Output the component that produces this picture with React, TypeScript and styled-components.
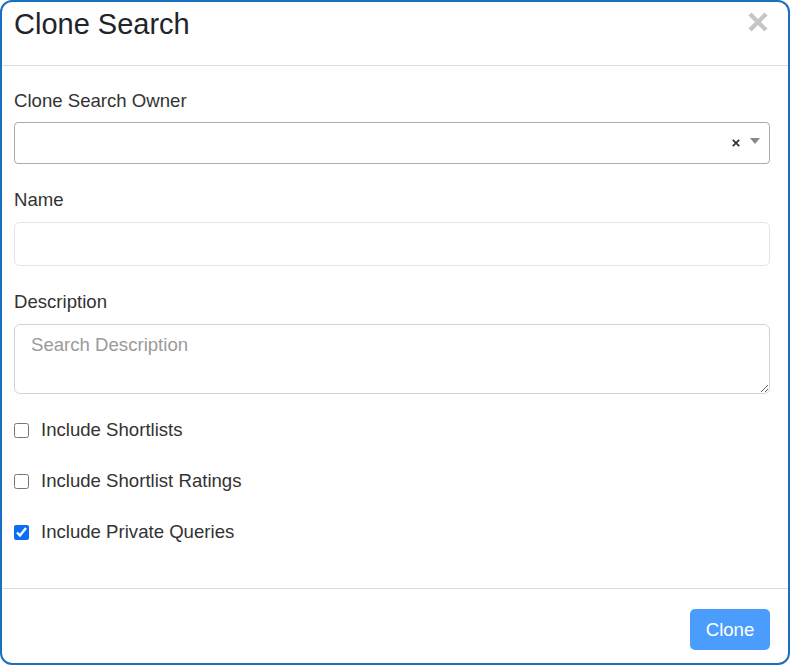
import React from "react";
import styled, { createGlobalStyle } from "styled-components";

const GlobalStyle = createGlobalStyle`
  html, body {
    margin: 0;
    padding: 0;
    background: #ffffff;
  }
  body {
    font-family: "Liberation Sans", Arial, sans-serif;
    color: #212529;
  }
`;

const Modal = styled.div`
  box-sizing: border-box;
  width: 790px;
  height: 665px;
  border: 2px solid #1a6fc1;
  border-radius: 12px;
  background: #fff;
  display: flex;
  flex-direction: column;
  overflow: hidden;
`;

const Header = styled.div`
  height: 64px;
  box-sizing: border-box;
  border-bottom: 1px solid #d9dde1;
  padding: 5px 20px 0 12px;
  display: flex;
  align-items: flex-start;
  justify-content: space-between;
`;

const Title = styled.h4`
  margin: 0;
  font-size: 29px;
  font-weight: 400;
  line-height: 35px;
  color: #212529;
`;

const CloseButton = styled.button`
  border: 0;
  background: transparent;
  padding: 0;
  margin-top: 5px;
  width: 20px;
  height: 20px;
  cursor: pointer;
  display: flex;
`;

const Body = styled.div`
  flex: 1;
  padding: 21px 18px 0 12px;
  display: flex;
  flex-direction: column;
`;

const Field = styled.div`
  display: flex;
  flex-direction: column;
  margin-bottom: 22px;
`;

const Label = styled.label`
  display: block;
  font-size: 18.6px;
  line-height: 28px;
  color: #333;
  margin-bottom: 7px;
`;

const SelectBox = styled.div`
  box-sizing: border-box;
  height: 42px;
  border: 1px solid #aaaaaa;
  border-radius: 4px;
  display: flex;
  align-items: center;
  justify-content: flex-end;
  padding-right: 9px;
  gap: 10px;
`;

const TextInput = styled.input`
  box-sizing: border-box;
  height: 44px;
  margin-top: 1px;
  border: 1px solid #e2e4e7;
  border-radius: 6px;
  padding: 0 16px;
  font-family: inherit;
  font-size: 18.6px;
  outline: none;
`;

const TextArea = styled.textarea`
  box-sizing: border-box;
  height: 70px;
  margin-top: 1px;
  border: 1px solid #ced4da;
  border-radius: 6px;
  padding: 6px 16px;
  font-family: inherit;
  font-size: 18.6px;
  line-height: 28px;
  color: #333;
  resize: vertical;
  outline: none;

  &::placeholder {
    color: #9a9a9a;
  }
`;

const CheckList = styled.div`
  display: flex;
  flex-direction: column;
  gap: 23px;
`;

const CheckRow = styled.label`
  display: flex;
  align-items: center;
  font-size: 18.6px;
  line-height: 28px;
  color: #333;
`;

const Checkbox = styled.input`
  width: 15px;
  height: 15px;
  margin: 1px 12px 0 0;
  accent-color: #0b6ef5;
`;

const Footer = styled.div`
  height: 75px;
  box-sizing: border-box;
  border-top: 1px solid #d9dde1;
  padding: 20px 18px 0 0;
  display: flex;
  justify-content: flex-end;
  align-items: flex-start;
`;

const PrimaryButton = styled.button`
  width: 80px;
  height: 41px;
  border: 0;
  border-radius: 5px;
  background: #4b9dfd;
  color: #fff;
  font-family: inherit;
  font-size: 18.6px;
  cursor: pointer;
`;

function CloseIcon() {
  return (
    <svg width="20" height="20" viewBox="0 0 20 20">
      <path d="M2 2 L18 18 M18 2 L2 18" stroke="#c6c6c6" strokeWidth="4.4" />
    </svg>
  );
}

function ClearIcon() {
  return (
    <svg width="8" height="8" viewBox="0 0 8 8">
      <path d="M0.8 0.8 L7.2 7.2 M7.2 0.8 L0.8 7.2" stroke="#333" strokeWidth="1.8" />
    </svg>
  );
}

function CaretIcon() {
  return (
    <svg width="10" height="6" viewBox="0 0 10 6" style={{ marginTop: -4 }}>
      <path d="M0 0 H10 L5 6 Z" fill="#888" />
    </svg>
  );
}

export default function App() {
  return (
    <>
      <GlobalStyle />
      <Modal>
        <Header>
          <Title>Clone Search</Title>
          <CloseButton aria-label="Close">
            <CloseIcon />
          </CloseButton>
        </Header>

        <Body>
          <Field>
            <Label>Clone Search Owner</Label>
            <SelectBox>
              <ClearIcon />
              <CaretIcon />
            </SelectBox>
          </Field>

          <Field>
            <Label>Name</Label>
            <TextInput type="text" />
          </Field>

          <Field>
            <Label>Description</Label>
            <TextArea placeholder="Search Description" />
          </Field>

          <CheckList>
            <CheckRow>
              <Checkbox type="checkbox" />
              Include Shortlists
            </CheckRow>
            <CheckRow>
              <Checkbox type="checkbox" />
              Include Shortlist Ratings
            </CheckRow>
            <CheckRow>
              <Checkbox type="checkbox" defaultChecked />
              Include Private Queries
            </CheckRow>
          </CheckList>
        </Body>

        <Footer>
          <PrimaryButton>Clone</PrimaryButton>
        </Footer>
      </Modal>
    </>
  );
}
